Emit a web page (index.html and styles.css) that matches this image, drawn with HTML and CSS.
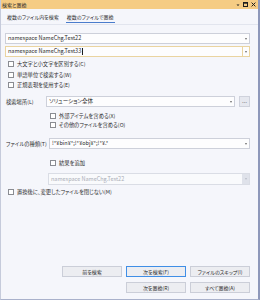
FILE: index.html
```html
<!DOCTYPE html>
<html lang="ja">
  <head>
    <meta charset="UTF-8" />
    <title>検索と置換</title>
    <link rel="stylesheet" href="styles.css">
  </head>
  <body>
    <div class="window">
      <div class="titlebar">
        <span>検索と置換</span>
        <div class="title-icons">
          <svg width="4" height="4" viewBox="0 0 4 4"><path d="M0.5 1.5h3L2 3z" fill="#1e1e1e"/></svg>
          <svg width="5" height="5" viewBox="0 0 5 5"><rect x="0.5" y="0.5" width="4" height="4" fill="none" stroke="#1e1e1e"/><rect x="0.5" y="0.5" width="4" height="1.2" fill="#1e1e1e"/></svg>
          <svg width="5" height="5" viewBox="0 0 5 5"><path d="M0.6 0.6l3.8 3.8M4.4 0.6l-3.8 3.8" stroke="#1e1e1e" stroke-width="1"/></svg>
        </div>
      </div>

      <div class="tabs">
        <div class="tab">複数のファイル内を検索</div>
        <div class="tab active">複数のファイルで置換</div>
      </div>

      <div class="content">
        <div class="combo">
          <span class="combo-text">namespace NameChg.Test22</span>
          <span class="arrow"></span>
        </div>
        <div class="combo focused">
          <span class="combo-text">namespace NameChg.Test33<span class="caret"></span></span>
          <span class="drop-btn"><span class="arrow"></span></span>
        </div>

        <div class="checks">
          <label class="check"><span class="box"></span>大文字と小文字を区別する(C)</label>
          <label class="check"><span class="box"></span>単語単位で検索する(W)</label>
          <label class="check"><span class="box"></span>正規表現を使用する(E)</label>
        </div>

        <div class="field location">
          <span class="field-label">検索場所(L)</span>
          <div class="combo grow">
            <span class="combo-text">ソリューション全体</span>
            <span class="arrow"></span>
          </div>
          <span class="browse">…</span>
        </div>

        <div class="sub-checks">
          <label class="check small"><span class="box"></span>外部アイテムを含める(X)</label>
          <label class="check small"><span class="box"></span>その他のファイルを含める(O)</label>
        </div>

        <div class="field types">
          <span class="field-label wide">ファイルの種類(T)</span>
          <div class="combo grow">
            <span class="combo-text">!*¥bin¥*;!*¥obj¥*;!*¥.*</span>
            <span class="arrow"></span>
          </div>
        </div>

        <div class="sub-checks append">
          <label class="check small"><span class="box"></span>結果を追加</label>
        </div>

        <div class="combo disabled">
          <span class="combo-text">namespace NameChg.Test22</span>
          <span class="drop-btn"><span class="arrow"></span></span>
        </div>

        <div class="checks keep">
          <label class="check small"><span class="box"></span>置換後に、変更したファイルを閉じない(M)</label>
        </div>

        <div class="buttons">
          <div class="btn-row">
            <button>前を検索</button>
            <button class="default">次を検索(F)</button>
            <button>ファイルのスキップ(I)</button>
          </div>
          <div class="btn-row">
            <button>次を置換(R)</button>
            <button>すべて置換(A)</button>
          </div>
        </div>
      </div>
    </div>
  </body>
</html>
```

FILE: styles.css
```css
* {
  box-sizing: border-box;
}

body {
  margin: 0;
  font-family: "Noto Sans CJK JP", "Noto Sans", sans-serif;
  font-size: 5.3px;
  color: #2b2b2b;
  font-feature-settings: "palt";
}

.window {
  width: 260px;
  height: 300px;
  display: flex;
  flex-direction: column;
  background: #f5f6fb;
  border-left: 1px solid #c6cbdb;
  border-right: 2px solid #8e98ba;
  border-bottom: 1px solid #a9b1cb;
}

.titlebar {
  height: 9px;
  flex: none;
  background: #f5cc84;
  display: flex;
  align-items: center;
  justify-content: space-between;
  padding: 0 2px 0 1px;
  font-size: 5px;
  line-height: 9px;
}

.title-icons {
  display: flex;
  align-items: center;
  gap: 3px;
}

.title-icons svg {
  display: block;
}

.tabs {
  height: 16px;
  flex: none;
  display: flex;
  align-items: flex-start;
  gap: 6px;
  padding-left: 5px;
  border-bottom: 1px solid #e2e5ee;
  font-size: 5px;
}

.tab {
  padding: 3px 1px 1px;
  line-height: 9px;
  border-bottom: 1px solid transparent;
}

.tab.active {
  border-bottom-color: #4a7ccc;
}

.content {
  flex: 1;
  display: flex;
  flex-direction: column;
  padding: 8px 8px 6px 4px;
}

.combo {
  height: 11px;
  flex: none;
  display: flex;
  align-items: center;
  background: #fdfdfe;
  border: 1px solid #cdd0da;
  padding-left: 2px;
  font-size: 5.5px;
}

.combo + .combo {
  margin-top: 2px;
}

.combo-text {
  flex: 1;
  white-space: nowrap;
  line-height: 9px;
}

.arrow {
  width: 0;
  height: 0;
  margin-right: 2px;
  border-left: 1.5px solid transparent;
  border-right: 1.5px solid transparent;
  border-top: 2px solid #6b6b6b;
}

.combo.focused {
  border-color: #ead4a0;
}

.caret {
  display: inline-block;
  width: 1px;
  height: 7px;
  margin-left: 1px;
  vertical-align: middle;
  background: #1e1e1e;
}

.drop-btn {
  width: 7px;
  height: 100%;
  display: flex;
  align-items: center;
  justify-content: center;
  border-left: 1px solid #ead4a0;
}

.drop-btn .arrow {
  margin-right: 0;
}

.combo.disabled {
  height: 12px;
  margin-top: 5.5px;
  margin-left: 43px;
  background: #f9fafc;
  border-color: #dadde5;
  color: #a9adb6;
}

.combo.disabled .drop-btn {
  border-left: none;
  background: #dfe2ea;
}

.combo.disabled .arrow {
  border-top-color: #b9bdc7;
}

.checks {
  margin-top: 2px;
  margin-left: 3px;
}

.check {
  height: 10.5px;
  display: flex;
  align-items: center;
  gap: 3px;
  white-space: nowrap;
}

.check.small {
  height: 9px;
}

.box {
  width: 6px;
  height: 6px;
  flex: none;
  background: #fff;
  border: 1px solid #8a8c92;
}

.field {
  display: flex;
  align-items: center;
}

.field-label {
  width: 41px;
  flex: none;
  padding-left: 1px;
  white-space: nowrap;
}

.field-label.wide {
  width: 44px;
}

.grow {
  flex: 1;
}

.location {
  margin-top: 5.5px;
  gap: 4px;
}

.location .field-label {
  width: 37px;
}

.browse {
  width: 11px;
  height: 11px;
  flex: none;
  display: flex;
  align-items: center;
  justify-content: center;
  background: #e6e8ef;
  border: 1px solid #cfd2dc;
  color: #555;
  font-size: 5px;
}

.sub-checks {
  margin-top: 4.5px;
  margin-left: 45px;
}

.types {
  margin-top: 8.5px;
}

.sub-checks.append {
  margin-top: 9.5px;
}

.checks.keep {
  margin-top: 2.5px;
}

.buttons {
  margin-top: auto;
  display: flex;
  flex-direction: column;
  align-items: flex-end;
  gap: 5px;
}

.btn-row {
  display: flex;
  gap: 4px;
}

button {
  width: 60px;
  height: 11px;
  padding: 0;
  font-family: inherit;
  font-size: 5px;
  font-feature-settings: "palt";
  color: #2b2b2b;
  background: #ecedf1;
  border: 1px solid #cbced8;
  border-radius: 0;
}

button.default {
  border-color: #3f8ee6;
}
```
